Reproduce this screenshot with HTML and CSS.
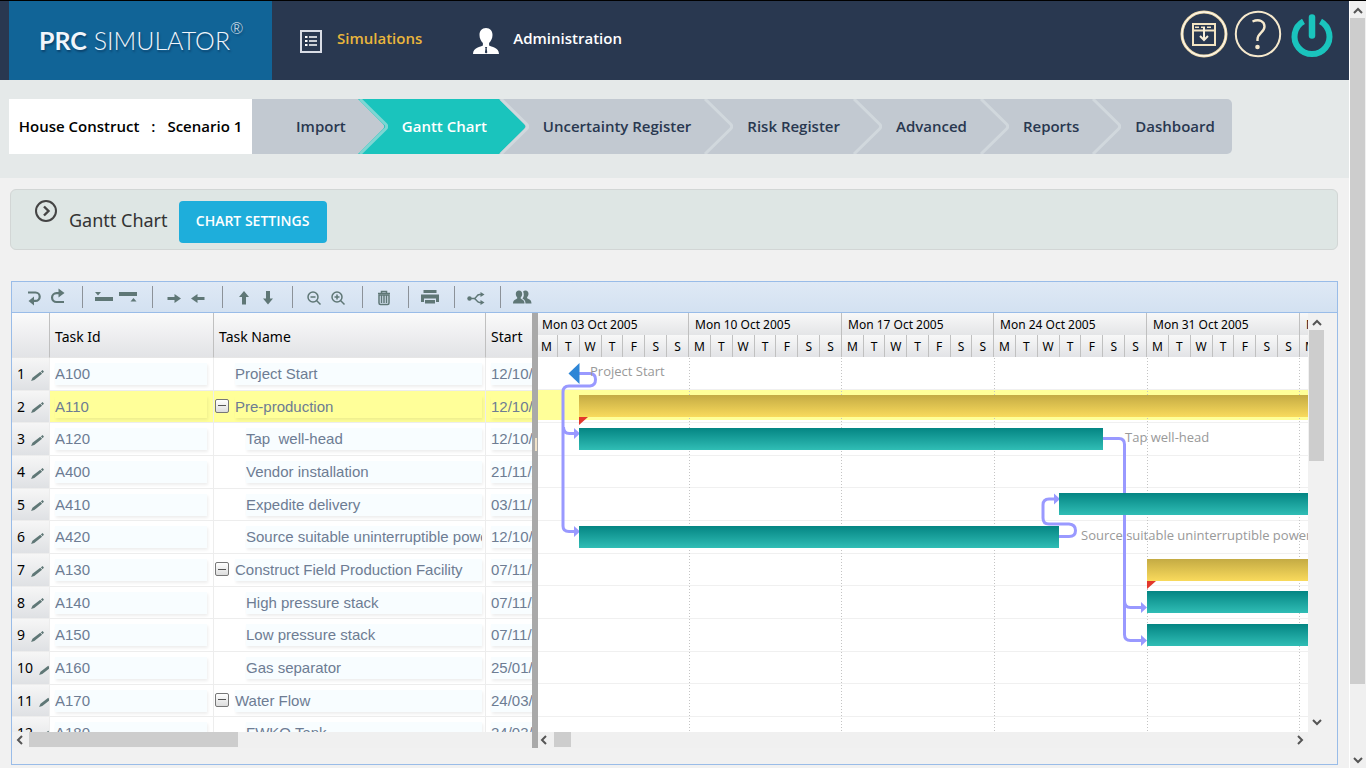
FILE: index.html
```html
<!DOCTYPE html>
<html lang="en">
<head>
<meta charset="utf-8">
<title>PRC Simulator - Gantt Chart</title>
<link rel="stylesheet" href="styles.css">
</head>
<body>
<div class="main">
  <header class="topbar">
    <a class="logo" href="#"><b>PRC</b> SIMULATOR<sup>®</sup></a>
    <nav class="menu">
      <a class="menu-link active" href="#">
        <svg width="24" height="24" viewBox="0 0 24 24" fill="none" stroke="#d9dde6" stroke-width="2"><rect x="2" y="2" width="20" height="21"/><path d="M10 8h8M10 12h8M10 16h8" stroke="#fff" stroke-width="1.6"/><path d="M6 8h2.500M6 12h2.500M6 16h2.500" stroke="#fff" stroke-width="2.200"/></svg>
        <span>Simulations</span>
      </a>
      <a class="menu-link" href="#">
        <svg width="26" height="28" viewBox="0 0 26 28"><path fill="#fff" d="M13 1c4.200 0 6.500 3 6.500 7 0 3.600-1.600 6-3.400 8v2.500c2 1.500 9.900 1.500 9.900 8.500H0c0-7 8-7 9.900-8.500V16C8 14 6.500 11.600 6.500 8c0-4 2.300-7 6.500-7z"/><path fill="#293850" d="M12 20h2.200l-.5 1.500.6 4-1.200 1-1.200-1 .6-4z"/></svg>
        <span>Administration</span>
      </a>
    </nav>
    <div class="tools">
      <button type="button" aria-label="Download">
        <svg width="48" height="48" viewBox="0 0 48 48" fill="none"><circle cx="24" cy="24" r="22" stroke="#f0dcae" stroke-width="3"/><circle cx="24" cy="24" r="22" stroke="#fff" stroke-width="1"/><path d="M13 14h22v21H13zM13 20.500h22" stroke="#f3e4c2" stroke-width="2"/><path d="M15 17.300h18" stroke="#f3e4c2" stroke-width="1.600" stroke-dasharray="4 2"/><path d="M24 17v12M20 26l4 4 4-4" stroke="#f8eed8" stroke-width="2"/></svg>
      </button>
      <button type="button" aria-label="Help">
        <svg width="48" height="48" viewBox="0 0 48 48" fill="none"><circle cx="24" cy="24" r="22.200" stroke="#f6e9cd" stroke-width="2"/><path d="M18.500 11.500c7-3 12 0 12 5 0 6-7 6.500-7 13v1.500" stroke="#f6e9cd" stroke-width="2.400"/><circle cx="23.500" cy="37" r="2.300" fill="#f6e9cd"/></svg>
      </button>
      <button type="button" aria-label="Log out">
        <svg width="48" height="48" viewBox="0 0 48 48" fill="none" stroke="#1ac4bd"><path d="M15.500 11.300a17.500 17.500 0 1 0 17 0" stroke-width="6"/><path d="M24 7.500v18" stroke-width="6.500" stroke-linecap="round"/></svg>
      </button>
    </div>
  </header>

  <div class="crumbs">
    <div class="scenario"><span>House Construct</span><span>:</span><span>Scenario 1</span></div>
    <nav class="steps">
      <a class="step before-current" href="#">Import<svg class="chev" viewBox="0 0 30 55"><path class="tip" d="M0 0l25 25q2.500 2.500 0 5L0 55z"/><path class="edge" d="M2 0l25.500 25q2.500 2.500 0 5L2 55"/></svg></a>
      <a class="step current" href="#">Gantt Chart<svg class="chev" viewBox="0 0 30 55"><path class="tip" d="M0 0l25 25q2.500 2.500 0 5L0 55z"/><path class="edge" d="M2 0l25.500 25q2.500 2.500 0 5L2 55"/></svg></a>
      <a class="step" href="#">Uncertainty Register<svg class="chev" viewBox="0 0 30 55"><path class="edge" d="M2 0l25.500 25q2.500 2.500 0 5L2 55"/></svg></a>
      <a class="step" href="#">Risk Register<svg class="chev" viewBox="0 0 30 55"><path class="edge" d="M2 0l25.500 25q2.500 2.500 0 5L2 55"/></svg></a>
      <a class="step" href="#">Advanced<svg class="chev" viewBox="0 0 30 55"><path class="edge" d="M2 0l25.500 25q2.500 2.500 0 5L2 55"/></svg></a>
      <a class="step" href="#">Reports<svg class="chev" viewBox="0 0 30 55"><path class="edge" d="M2 0l25.500 25q2.500 2.500 0 5L2 55"/></svg></a>
      <a class="step" href="#">Dashboard</a>
    </nav>
  </div>

  <section class="panel">
    <svg class="panel-icon" width="24" height="24" viewBox="0 0 24 24" fill="none" stroke="#444"><circle cx="12" cy="12" r="10" stroke-width="2"/><path d="M10 7.500l4.500 4.500-4.500 4.500" stroke-width="2.400"/></svg>
    <h1>Gantt Chart</h1>
    <button type="button" class="settings">CHART SETTINGS</button>
  </section>

  <section class="gantt">
    <div class="toolbar">
      <div class="group">
        <button type="button" aria-label="Undo"><svg viewBox="0 0 24 24"><path d="M6 7.500h7.500a4.200 4.200 0 0 1 0 8.400H11" class="ln"/><path d="M12 11.500v9L6.500 16z"/></svg></button>
        <button type="button" aria-label="Redo"><svg viewBox="0 0 24 24"><path d="M18 17h-7.500a4.200 4.200 0 0 1 0-8.900H13" class="ln"/><path d="M12.500 3.500v9L18.500 8z"/></svg></button>
      </div>
      <div class="group">
        <button type="button" aria-label="Insert above"><svg viewBox="0 0 24 24"><path d="M3 12h18v4H3zM3 7h6l-3 3.500z"/></svg></button>
        <button type="button" aria-label="Insert below"><svg viewBox="0 0 24 24"><path d="M3 7h18v4H3zM14.500 16.500h6l-3-3.500z"/></svg></button>
      </div>
      <div class="group">
        <button type="button" aria-label="Indent"><svg viewBox="0 0 24 24"><path d="M5.500 12h7V9l6.500 4.500-6.500 4.500v-3h-7z"/></svg></button>
        <button type="button" aria-label="Outdent"><svg viewBox="0 0 24 24"><path d="M18.500 12h-7V9L5 13.500l6.500 4.500v-3h7z"/></svg></button>
      </div>
      <div class="group">
        <button type="button" aria-label="Move up"><svg viewBox="0 0 24 24"><path d="M10 19.500V12H7l5-6 5 6h-3v7.500z"/></svg></button>
        <button type="button" aria-label="Move down"><svg viewBox="0 0 24 24"><path d="M10 6v7.500H7l5 6 5-6h-3V6z"/></svg></button>
      </div>
      <div class="group">
        <button type="button" aria-label="Zoom out"><svg viewBox="0 0 24 24"><circle cx="11" cy="12" r="5" class="thin"/><path d="M14.500 15.500l4 4M8.500 12h5" class="thin"/></svg></button>
        <button type="button" aria-label="Zoom in"><svg viewBox="0 0 24 24"><circle cx="11" cy="12" r="5" class="thin"/><path d="M14.500 15.500l4 4M8.500 12h5M11 9.500v5" class="thin"/></svg></button>
      </div>
      <div class="group">
        <button type="button" aria-label="Delete"><svg viewBox="0 0 24 24"><path d="M7 10h10v8q0 1.500-1.500 1.500h-7Q7 19.500 7 18z" class="thin"/><path d="M6 8.500h12M9.500 8V6.500h5V8M9.500 10v8M12 10v8M14.500 10v8" class="thin"/></svg></button>
      </div>
      <div class="group">
        <button type="button" aria-label="Print"><svg viewBox="0 0 24 24"><path d="M5.500 5h13v3h-13zM3 9.500h18V17h-3v-3.500H6V17H3zM7 15h10v3.500H7z"/></svg></button>
      </div>
      <div class="group">
        <button type="button" aria-label="Dependencies"><svg viewBox="0 0 24 24"><circle cx="5.500" cy="13.500" r="2.200"/><path d="M6 13.500h4c2.500 0 2.500-4 5.500-4h2M10 13.500c2.500 0 2.500 4 5.500 4h2" class="thin"/><path d="M16.500 7v5l4-2.500zM16.500 15v5l4-2.500z"/></svg></button>
      </div>
      <div class="group">
        <button type="button" aria-label="Resources"><svg viewBox="0 0 24 24"><path d="M9 5.500c2 0 3.200 1.500 3.200 3.500 0 1.600-.7 2.700-1.500 3.500v1c1 .9 3.800 1.200 3.800 5H3c0-3.800 3-4.100 4.200-5v-1C6.500 11.700 5.800 10.600 5.800 9c0-2 1.200-3.500 3.200-3.500zM15.500 5.500c1.900 0 3 1.400 3 3.300 0 1.600-.7 2.700-1.400 3.400v1c1.500 1 4.400 1 4.400 5.300h-6c0-3.100-1.500-4.100-3-4.800 1.500-2 1.800-4.400.6-7.200.6-.6 1.400-1 2.400-1z"/></svg></button>
      </div>
    </div>

    <div class="panes">
      <div class="grid-pane">
        <div class="grid-view">
          <table class="tasks">
            <colgroup><col class="c-num"><col class="c-id"><col class="c-name"><col class="c-date"></colgroup>
            <thead><tr><th></th><th>Task Id</th><th>Task Name</th><th>Start</th></tr></thead>
            <tbody>
              <tr><td><div class="num">1<svg class="pen" viewBox="0 0 14 12"><path d="M0 12l1.500-3.500L10 2l2 2.200L3.500 11zM10.700 1.500L12.500 0 14 1.500l-1.300 2z"/></svg></div></td><td><span class="f">A100</span></td><td><span class="f l1">Project Start</span></td><td><span class="f">12/10/2005</span></td></tr>
              <tr class="sel"><td><div class="num">2<svg class="pen" viewBox="0 0 14 12"><path d="M0 12l1.500-3.500L10 2l2 2.200L3.500 11zM10.700 1.500L12.500 0 14 1.500l-1.300 2z"/></svg></div></td><td><span class="f">A110</span></td><td><div class="parent"><button type="button" class="fold" aria-label="Collapse"></button><span class="f">Pre-production</span></div></td><td><span class="f">12/10/2005</span></td></tr>
              <tr><td><div class="num">3<svg class="pen" viewBox="0 0 14 12"><path d="M0 12l1.500-3.500L10 2l2 2.200L3.500 11zM10.700 1.500L12.500 0 14 1.500l-1.300 2z"/></svg></div></td><td><span class="f">A120</span></td><td><span class="f l2">Tap&nbsp; well-head</span></td><td><span class="f">12/10/2005</span></td></tr>
              <tr><td><div class="num">4<svg class="pen" viewBox="0 0 14 12"><path d="M0 12l1.500-3.500L10 2l2 2.200L3.500 11zM10.700 1.500L12.500 0 14 1.500l-1.300 2z"/></svg></div></td><td><span class="f">A400</span></td><td><span class="f l2">Vendor installation</span></td><td><span class="f">21/11/2005</span></td></tr>
              <tr><td><div class="num">5<svg class="pen" viewBox="0 0 14 12"><path d="M0 12l1.500-3.500L10 2l2 2.200L3.500 11zM10.700 1.500L12.500 0 14 1.500l-1.300 2z"/></svg></div></td><td><span class="f">A410</span></td><td><span class="f l2">Expedite delivery</span></td><td><span class="f">03/11/2005</span></td></tr>
              <tr><td><div class="num">6<svg class="pen" viewBox="0 0 14 12"><path d="M0 12l1.500-3.500L10 2l2 2.200L3.500 11zM10.700 1.500L12.500 0 14 1.500l-1.300 2z"/></svg></div></td><td><span class="f">A420</span></td><td><span class="f l2">Source suitable uninterruptible power</span></td><td><span class="f">12/10/2005</span></td></tr>
              <tr><td><div class="num">7<svg class="pen" viewBox="0 0 14 12"><path d="M0 12l1.500-3.500L10 2l2 2.200L3.500 11zM10.700 1.500L12.500 0 14 1.500l-1.300 2z"/></svg></div></td><td><span class="f">A130</span></td><td><div class="parent"><button type="button" class="fold" aria-label="Collapse"></button><span class="f">Construct Field Production Facility</span></div></td><td><span class="f">07/11/2005</span></td></tr>
              <tr><td><div class="num">8<svg class="pen" viewBox="0 0 14 12"><path d="M0 12l1.500-3.500L10 2l2 2.200L3.500 11zM10.700 1.500L12.500 0 14 1.500l-1.300 2z"/></svg></div></td><td><span class="f">A140</span></td><td><span class="f l2">High pressure stack</span></td><td><span class="f">07/11/2005</span></td></tr>
              <tr><td><div class="num">9<svg class="pen" viewBox="0 0 14 12"><path d="M0 12l1.500-3.500L10 2l2 2.200L3.500 11zM10.700 1.500L12.500 0 14 1.500l-1.300 2z"/></svg></div></td><td><span class="f">A150</span></td><td><span class="f l2">Low pressure stack</span></td><td><span class="f">07/11/2005</span></td></tr>
              <tr><td><div class="num">10<svg class="pen" viewBox="0 0 14 12"><path d="M0 12l1.500-3.500L10 2l2 2.200L3.500 11zM10.700 1.500L12.500 0 14 1.500l-1.300 2z"/></svg></div></td><td><span class="f">A160</span></td><td><span class="f l2">Gas separator</span></td><td><span class="f">25/01/2006</span></td></tr>
              <tr><td><div class="num">11<svg class="pen" viewBox="0 0 14 12"><path d="M0 12l1.500-3.500L10 2l2 2.200L3.500 11zM10.700 1.500L12.500 0 14 1.500l-1.300 2z"/></svg></div></td><td><span class="f">A170</span></td><td><div class="parent"><button type="button" class="fold" aria-label="Collapse"></button><span class="f">Water Flow</span></div></td><td><span class="f">24/03/2006</span></td></tr>
              <tr><td><div class="num">12<svg class="pen" viewBox="0 0 14 12"><path d="M0 12l1.500-3.500L10 2l2 2.200L3.500 11zM10.700 1.500L12.500 0 14 1.500l-1.300 2z"/></svg></div></td><td><span class="f">A180</span></td><td><span class="f l2">FWKO Tank</span></td><td><span class="f">24/03/2006</span></td></tr>
            </tbody>
          </table>
        </div>
        <div class="hscroll"><svg viewBox="0 0 16 16"><path d="M10 4L6 8l4 4"/></svg><div class="thumb wide"></div></div>
      </div>
      <div class="splitter"><i></i></div>
      <div class="chart-pane">
        <div class="timeline">
          <div class="week"><span>Mon 03 Oct 2005</span><ol><li>M</li><li>T</li><li>W</li><li>T</li><li>F</li><li>S</li><li>S</li></ol></div>
          <div class="week"><span>Mon 10 Oct 2005</span><ol><li>M</li><li>T</li><li>W</li><li>T</li><li>F</li><li>S</li><li>S</li></ol></div>
          <div class="week"><span>Mon 17 Oct 2005</span><ol><li>M</li><li>T</li><li>W</li><li>T</li><li>F</li><li>S</li><li>S</li></ol></div>
          <div class="week"><span>Mon 24 Oct 2005</span><ol><li>M</li><li>T</li><li>W</li><li>T</li><li>F</li><li>S</li><li>S</li></ol></div>
          <div class="week"><span>Mon 31 Oct 2005</span><ol><li>M</li><li>T</li><li>W</li><li>T</li><li>F</li><li>S</li><li>S</li></ol></div>
          <div class="week"><span>Mon 07 Nov 2005</span><ol><li>M</li><li>T</li><li>W</li><li>T</li><li>F</li><li>S</li><li>S</li></ol></div>
        </div>
        <div class="canvas">
          <div class="row"><span class="tag" style="left:52px">Project Start</span></div>
          <div class="row sel"><div class="bar gold" style="left:41px;width:1200px"></div></div>
          <div class="row"><div class="bar" style="left:41px;width:524px"></div><span class="tag" style="left:587px">Tap well-head</span></div>
          <div class="row"></div>
          <div class="row"><div class="bar" style="left:521px;width:900px"></div></div>
          <div class="row"><div class="bar" style="left:41px;width:480px"></div><span class="tag" style="left:543px">Source suitable uninterruptible power</span></div>
          <div class="row"><div class="bar gold" style="left:609px;width:900px"></div></div>
          <div class="row"><div class="bar" style="left:609px;width:900px"></div></div>
          <div class="row"><div class="bar" style="left:609px;width:900px"></div></div>
          <div class="row"></div>
          <div class="row"></div>
          <svg class="links" width="770" height="375" viewBox="538 357 770 375" fill="none">
            <path d="M689.500 358v374M841.500 358v374M994.500 358v374M1147.500 358v374M1299.500 358v374" stroke="#c4c4c4" stroke-dasharray="1 2"/>
            <g stroke="#9999ff" stroke-width="3">
              <path d="M579 373.500h11q5.500 0 5.500 6t-5.500 6.500h-21q-6 0-6 6v134q0 5.500 6 5.500h6M563.500 427q0 6.500 6 6.500h5"/>
              <path d="M1103 438.500h16q5.500 0 5.500 6v190q0 6 6 6h11M1124.500 601q0 6.500 6 6.500h11"/>
              <path d="M1059 536.500h10q6.500 0 6.500-6t-6.500-6.500h-20q-6 0-6-6v-13q0-6 6-6h5"/>
            </g>
            <path fill="#9999ff" d="M574 428v11l6-5.500zM574 526v11l6-5.500zM1141 602v11l6-5.500zM1141 635v11l6-5.500zM1054 493.500v11l6-5.500z"/>
            <path fill="#2e86d6" d="M568.500 373.500L579.500 363v21z"/>
            <path fill="#e2382c" d="M579 417h9l-9 8zM1147 581h9l-9 8z"/>
          </svg>
        </div>
        <div class="hscroll"><svg viewBox="0 0 16 16"><path d="M8 4L4 8l4 4"/></svg><div class="thumb"></div><svg class="end" viewBox="0 0 16 16"><path d="M6 4l4 4-4 4"/></svg></div>
      </div>
      <div class="vscroll"><svg viewBox="0 0 16 16"><path d="M4 11l4-4 4 4"/></svg><div class="thumb"></div><svg class="end" viewBox="0 0 16 16"><path d="M4 5l4 4 4-4"/></svg></div>
    </div>
  </section>
</div>
<div class="page-scroll"><svg viewBox="0 0 16 16"><path d="M4 11l4-4 4 4"/></svg><div class="thumb"></div><svg class="end" viewBox="0 0 16 16"><path d="M4 6l4 4 4-4"/></svg></div>
</body>
</html>
```
FILE: styles.css
```css
* { box-sizing: border-box; }
body {
  margin: 0;
  height: 100vh;
  display: flex;
  overflow: hidden;
  border-top: 1px solid #000;
  background: #f1f1f1;
  font-family: "Open Sans", "Noto Sans", sans-serif;
  color: #000;
}
a { color: inherit; text-decoration: none; }
button { border: 0; padding: 0; background: none; font: inherit; cursor: pointer; }
svg { display: block; flex: none; }

.main { flex: 1; min-width: 0; display: flex; flex-direction: column; }

/* Top bar */
.topbar {
  display: flex;
  flex: none;
  height: 79px;
  padding: 0 13px 0 9px;
  background: #293850;
}
.logo {
  width: 263px;
  padding: 0 0 0 30px;
  background: #116497;
  color: #f1f5fb;
  font: 300 25px/78px Lato, "Open Sans", sans-serif;
  white-space: nowrap;
  text-shadow: 1px 2px 2px rgba(0, 20, 50, .4);
}
.logo b { font-weight: 700; }
.logo sup { font-size: 16px; line-height: 16px; vertical-align: 16px; }
.menu { display: flex; align-items: center; gap: 51px; padding: 0 27px; }
.menu-link {
  display: flex;
  align-items: center;
  gap: 14px;
  color: #fff;
  font-size: 15px;
  font-weight: 600;
}
.menu-link.active { color: #e9b63c; }
.menu-link span { padding-bottom: 6px; }
.tools { display: flex; gap: 6px; margin-left: auto; padding-top: 9px; align-items: flex-start; }

/* Step bar */
.crumbs {
  display: flex;
  flex: none;
  height: 98px;
  padding: 19px 9px 24px;
  background: #e5e9e9;
  font-size: 15px;
  font-weight: 600;
}
.scenario {
  display: flex;
  align-items: center;
  justify-content: center;
  gap: 12px;
  width: 243px;
  padding-bottom: 2px;
  background: #fff;
}
.steps {
  display: flex;
  border-radius: 0 5px 5px 0;
  background: #c2c9d1;
  color: #293850;
}
.step {
  position: relative;
  display: flex;
  align-items: center;
  padding: 0 12px 2px 44px;
}
.step:last-child { padding-right: 17px; }
.step.current { background: #1ac4bd; color: #fff; }
.chev { position: absolute; left: 100%; top: 0; z-index: 1; width: 30px; height: 55px; }
.tip { fill: #c2c9d1; }
.edge { fill: none; stroke: #d1d8dd; stroke-width: 3; }
.before-current .edge { stroke: #7fd6d3; }
.current .tip { fill: #1ac4bd; }

/* Title panel */
.panel {
  display: flex;
  flex: none;
  align-items: center;
  height: 61px;
  margin: 11px 11px 0 10px;
  padding: 0 23px;
  border: 1px solid #d2d6d5;
  border-radius: 6px;
  background: #dee6e4;
}
.panel-icon { margin-bottom: 17px; }
.panel h1 { margin: 0 11px; color: #333; font: 400 18px/28px "Noto Sans", sans-serif; }
.settings {
  width: 148px;
  height: 42px;
  margin-top: 4px;
  padding-bottom: 2px;
  border-radius: 4px;
  background: #1eaedb;
  color: #fff;
  font-size: 14px;
  font-weight: 600;
}

/* Gantt frame */
.gantt {
  flex: 1;
  min-height: 0;
  display: flex;
  flex-direction: column;
  margin: 31px 11px 3px;
  border: 1px solid #99bce8;
}
.toolbar {
  display: flex;
  flex: none;
  align-items: center;
  height: 31px;
  padding-left: 1px;
  border-bottom: 1px solid #99bce8;
  background: linear-gradient(#dfe9f5, #d3e1f1);
}
.group { display: flex; align-items: center; height: 22px; padding: 0 12px 0 9px; border-right: 1px solid #8c9299; }
.group:last-child { border-right: 0; }
.toolbar button, .toolbar button svg { width: 24px; height: 24px; }
.toolbar svg { fill: #5f7776; }
.toolbar .ln { fill: none; stroke: #5f7776; stroke-width: 2.2; }
.toolbar .thin { fill: none; stroke: #5f7776; stroke-width: 1.5; }
.panes { flex: 1; min-height: 0; display: flex; padding: 0 12px 16px 0; }

/* Task table */
.grid-pane { width: 520px; display: flex; flex-direction: column; }
.grid-view { flex: 1; min-height: 0; overflow: hidden; background: #fff; }
.tasks { width: 600px; table-layout: fixed; border-collapse: separate; border-spacing: 0; }
.c-num { width: 38px; }
.c-id { width: 164px; }
.c-name { width: 272px; }
.tasks th {
  height: 45px;
  padding: 4px 5px 0;
  border-right: 1px solid #c0c0c0;
  border-bottom: 1px solid #e6e6e6;
  background: linear-gradient(#fafafa, #e2e3e6);
  font: 400 14px/20px "Noto Sans", sans-serif;
  text-align: left;
}
.tasks td {
  height: 33px;
  padding: 0 6px 0 5px;
  border-right: 1px solid #ededed;
  border-bottom: 1px solid #ededed;
  color: #6d7c93;
  font: 15px/22px "Liberation Sans", Arial, sans-serif;
  white-space: nowrap;
}
.tasks tr:nth-child(3n+2) td { height: 32px; }
.tasks td:first-child { padding-right: 0; background: linear-gradient(#f6f6f6, #dfe1e4); }
.tasks .sel td:not(:first-child) { background: #ffff99; }
.tasks td:nth-child(3) { padding: 0 3px 0 4px; }
.f { display: block; overflow: hidden; height: 22px; background: #f8fdff; box-shadow: 1px 2px 3px rgba(0, 0, 0, .07); }
.sel .f { background: transparent; }
.l1 { margin-left: 17px; }
.l2 { margin-left: 28px; }
.parent { display: flex; align-items: center; }
.parent .f { flex: 1; }
.fold {
  width: 14px;
  height: 14px;
  margin: 0 6px 2px -3px;
  border: 1px solid #777;
  border-radius: 2px;
  background: linear-gradient(#555, #555) center / 8px 1px no-repeat, linear-gradient(#fff, #ddd);
}
.num {
  display: flex;
  align-items: center;
  gap: 6px;
  overflow: hidden;
  color: #000;
  font: 14px/22px "Noto Sans", sans-serif;
}
.pen { width: 13px; height: 11px; margin-top: 2px; fill: #5f7776; }

.splitter { width: 6px; background: #a9a9a9; display: flex; align-items: flex-start; padding: 125px 1px 0 3px; }
.splitter i { width: 2px; height: 13px; background: #f0e2c8; }

/* Timeline */
.chart-pane { flex: 1; min-width: 0; display: flex; flex-direction: column; overflow: hidden; }
.timeline { display: flex; flex: none; height: 44px; margin-left: -2px; }
.week {
  flex: none;
  width: 153px;
  border-right: 1px solid #c0c0c0;
  background: linear-gradient(#f8f8f8, #e4e5e7 22px, #f8f8f8 22px, #e2e3e6);
  font: 12px/20px "Noto Sans", sans-serif;
}
.week:nth-child(3) { width: 152px; }
.week span { display: block; padding: 2px 0 0 6px; white-space: nowrap; }
.week ol { display: flex; margin: 0; padding: 0; list-style: none; text-align: center; }
.week li { flex: 1; padding-top: 2px; }
.week li + li { border-left: 1px solid #c0c0c0; }
.canvas { position: relative; flex: 1; min-height: 0; overflow: hidden; background: #fff; }
.row { position: relative; height: 33px; border-bottom: 1px solid #f0f0f0; }
.row:nth-child(3n+4) { height: 32px; }
.row.sel { background: linear-gradient(#ffff99, #ffff99) 0 0 / 100% 30px no-repeat; }
.bar { position: absolute; top: 5px; z-index: 2; height: 22px; background: linear-gradient(#048583, #30bdb5); }
.bar.gold { background: linear-gradient(#c4ab44, #f9da5c); }
.tag { position: absolute; top: 4px; z-index: 2; color: #999; font-size: 13px; line-height: 20px; white-space: nowrap; }
.links { position: absolute; left: 0; top: 0; z-index: 1; }

/* Scroll bars */
.hscroll { display: flex; flex: none; height: 16px; background: #f0f0f0; }
.hscroll svg, .vscroll svg, .page-scroll svg { width: 16px; height: 16px; fill: none; stroke: #555; stroke-width: 2; }
.hscroll .thumb { width: 17px; height: 15px; background: #cdcdcd; }
.hscroll .thumb.wide { width: 209px; margin-left: 1px; }
.hscroll .end { margin-left: auto; }
.vscroll { display: flex; flex-direction: column; width: 17px; padding: 1px 0 17px 1px; }
.vscroll .thumb { width: 15px; height: 131px; background: #cdcdcd; }
.vscroll .end, .page-scroll .end { margin-top: auto; }
.page-scroll { display: flex; flex-direction: column; width: 17px; border-left: 1px solid #fff; background: #f0f0f0; padding-top: 1px; }
.page-scroll .thumb { width: 15px; height: 87%; background: #cdcdcd; }
```
